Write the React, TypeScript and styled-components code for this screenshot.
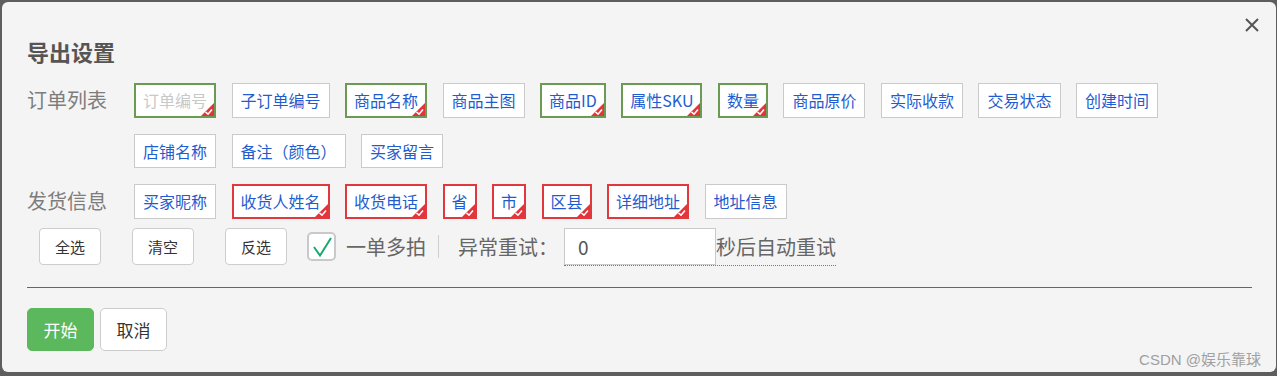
import styled, { createGlobalStyle } from 'styled-components';

type TagState = 'off' | 'green' | 'red';

interface TagItem {
  text: string;
  state: TagState;
  muted?: boolean;
}

const orderTags: TagItem[] = [
  { text: '订单编号', state: 'green', muted: true },
  { text: '子订单编号', state: 'off' },
  { text: '商品名称', state: 'green' },
  { text: '商品主图', state: 'off' },
  { text: '商品ID', state: 'green' },
  { text: '属性SKU', state: 'green' },
  { text: '数量', state: 'green' },
  { text: '商品原价', state: 'off' },
  { text: '实际收款', state: 'off' },
  { text: '交易状态', state: 'off' },
  { text: '创建时间', state: 'off' },
  { text: '店铺名称', state: 'off' },
  { text: '备注（颜色）', state: 'off' },
  { text: '买家留言', state: 'off' },
];

const shipTags: TagItem[] = [
  { text: '买家昵称', state: 'off' },
  { text: '收货人姓名', state: 'red' },
  { text: '收货电话', state: 'red' },
  { text: '省', state: 'red' },
  { text: '市', state: 'red' },
  { text: '区县', state: 'red' },
  { text: '详细地址', state: 'red' },
  { text: '地址信息', state: 'off' },
];

function CornerMark() {
  return (
    <Mark width="13" height="13" viewBox="0 0 13 13">
      <polygon points="13,0 13,13 0,13" fill="#e2343a" />
      <polyline points="4.5,9 7,11.2 11,6.5" fill="none" stroke="#fff" strokeWidth="1.6" />
    </Mark>
  );
}

function TagList({ items }: { items: TagItem[] }) {
  return (
    <Tags>
      {items.map((t) => (
        <Tag key={t.text} $state={t.state} $muted={t.muted}>
          {t.text}
          {t.state !== 'off' && <CornerMark />}
        </Tag>
      ))}
    </Tags>
  );
}

export default function App() {
  return (
    <>
      <GlobalStyle />
      <Dialog>
        <Close aria-label="close">
          <svg width="14" height="14" viewBox="0 0 14 14">
            <path d="M1 1L13 13M13 1L1 13" stroke="#555" strokeWidth="2" />
          </svg>
        </Close>
        <Title>导出设置</Title>

        <Fields>
          <Field>
            <Label>订单列表</Label>
            <TagList items={orderTags} />
          </Field>
          <Field>
            <Label>发货信息</Label>
            <TagList items={shipTags} />
          </Field>
        </Fields>

        <Toolbar>
          <ToolButton>全选</ToolButton>
          <ToolButton>清空</ToolButton>
          <ToolButton>反选</ToolButton>
          <CheckWrap>
            <CheckBox>
              <svg width="22" height="22" viewBox="0 0 22 22">
                <polyline points="3,11 9,19.5 20,2" fill="none" stroke="#19a870" strokeWidth="2" />
              </svg>
            </CheckBox>
            <OptionText>一单多拍</OptionText>
          </CheckWrap>
          <Separator />
          <OptionText>异常重试：</OptionText>
          <RetryGroup>
            <RetryInput defaultValue="0" />
            <OptionText>秒后自动重试</OptionText>
          </RetryGroup>
        </Toolbar>

        <Divider />

        <Footer>
          <PrimaryButton>开始</PrimaryButton>
          <CancelButton>取消</CancelButton>
        </Footer>

        <Watermark>CSDN @娱乐靠球</Watermark>
      </Dialog>
    </>
  );
}

// Styles
const GlobalStyle = createGlobalStyle`
  body {
    margin: 0;
    background: #5e5e5e;
    font-family: "Noto Sans CJK SC", "Noto Sans", sans-serif;
  }
`;

const Dialog = styled.div`
  position: relative;
  box-sizing: border-box;
  margin: 2px 1px 0 2px;
  height: 370px;
  padding: 34px 24px 0 25px;
  background: #f4f4f4;
  border-radius: 6px;
`;

const Close = styled.button`
  position: absolute;
  top: 16px;
  right: 17px;
  padding: 0;
  border: none;
  background: none;
  line-height: 0;
  cursor: pointer;
`;

const Title = styled.h2`
  margin: 0;
  font-size: 22px;
  line-height: 30px;
  font-weight: 700;
  color: #555;
`;

const Fields = styled.div`
  display: flex;
  flex-direction: column;
  gap: 16px;
  margin-top: 17px;
`;

const Field = styled.div`
  display: flex;
  align-items: flex-start;
`;

const Label = styled.div`
  width: 107px;
  flex-shrink: 0;
  font-size: 20px;
  line-height: 34px;
  color: #7d7d7d;
`;

const Tags = styled.div`
  flex: 1;
  display: flex;
  flex-wrap: wrap;
  gap: 16px 15.5px;
`;

const Tag = styled.span<{ $state: TagState; $muted?: boolean }>`
  position: relative;
  box-sizing: border-box;
  height: 34.5px;
  display: inline-flex;
  align-items: center;
  padding: 0 ${(p) => (p.$state === 'off' ? 8 : 7)}px;
  background: #fff;
  font-size: 16px;
  white-space: nowrap;
  color: ${(p) => (p.$muted ? '#c8c8c8' : '#1f5cd0')};
  border: ${(p) =>
    p.$state === 'green'
      ? '2px solid #6b9a53'
      : p.$state === 'red'
      ? '2px solid #e0383d'
      : '1px solid #cacaca'};
`;

const Mark = styled.svg`
  position: absolute;
  right: 0;
  bottom: 0;
`;

const Toolbar = styled.div`
  display: flex;
  align-items: center;
  margin-top: 9px;
  padding-left: 12px;
`;

const ToolButton = styled.button`
  box-sizing: border-box;
  width: 62px;
  height: 37px;
  margin-right: 31px;
  background: #fff;
  border: 1px solid #cdcdcd;
  border-radius: 4px;
  font-family: inherit;
  font-size: 15px;
  color: #333;
  cursor: pointer;

  &:nth-of-type(3) {
    margin-right: 20px;
  }
`;

const CheckWrap = styled.label`
  display: flex;
  align-items: center;
  gap: 10px;
`;

const CheckBox = styled.span`
  box-sizing: border-box;
  width: 29px;
  height: 29px;
  display: flex;
  align-items: center;
  justify-content: center;
  background: #fff;
  border: 2px solid #c9c9c9;
  border-radius: 5px;
`;

const OptionText = styled.span`
  font-size: 20px;
  line-height: 37px;
  color: #666;
  white-space: nowrap;
`;

const Separator = styled.span`
  width: 1px;
  height: 23px;
  margin: 0 19px 0 12px;
  background: #cfcfcf;
`;

const RetryGroup = styled.div`
  display: flex;
  align-items: center;
  margin-left: 6px;
  border-bottom: 1px dotted #777;
`;

const RetryInput = styled.input`
  box-sizing: border-box;
  width: 152px;
  height: 37px;
  padding: 0 13px;
  background: #fff;
  border: 1px solid #cacaca;
  outline: none;
  font-family: inherit;
  font-size: 19px;
  color: #555;
`;

const Divider = styled.hr`
  margin: 21px 0 0;
  border: none;
  border-top: 1px solid #666;
`;

const Footer = styled.div`
  display: flex;
  gap: 6px;
  margin-top: 20px;
`;

const FooterButton = styled.button`
  box-sizing: border-box;
  width: 67px;
  height: 43px;
  border-radius: 5px;
  font-family: inherit;
  font-size: 17px;
  cursor: pointer;
`;

const PrimaryButton = styled(FooterButton)`
  background: #5cb85c;
  border: 1px solid #5cb85c;
  color: #fff;
`;

const CancelButton = styled(FooterButton)`
  background: #fff;
  border: 1px solid #cccccc;
  color: #333;
`;

const Watermark = styled.div`
  position: absolute;
  right: 15px;
  bottom: 3px;
  font-size: 15px;
  color: #a0a0a0;
  font-family: "Liberation Sans", "Noto Sans CJK SC", sans-serif;
`;
